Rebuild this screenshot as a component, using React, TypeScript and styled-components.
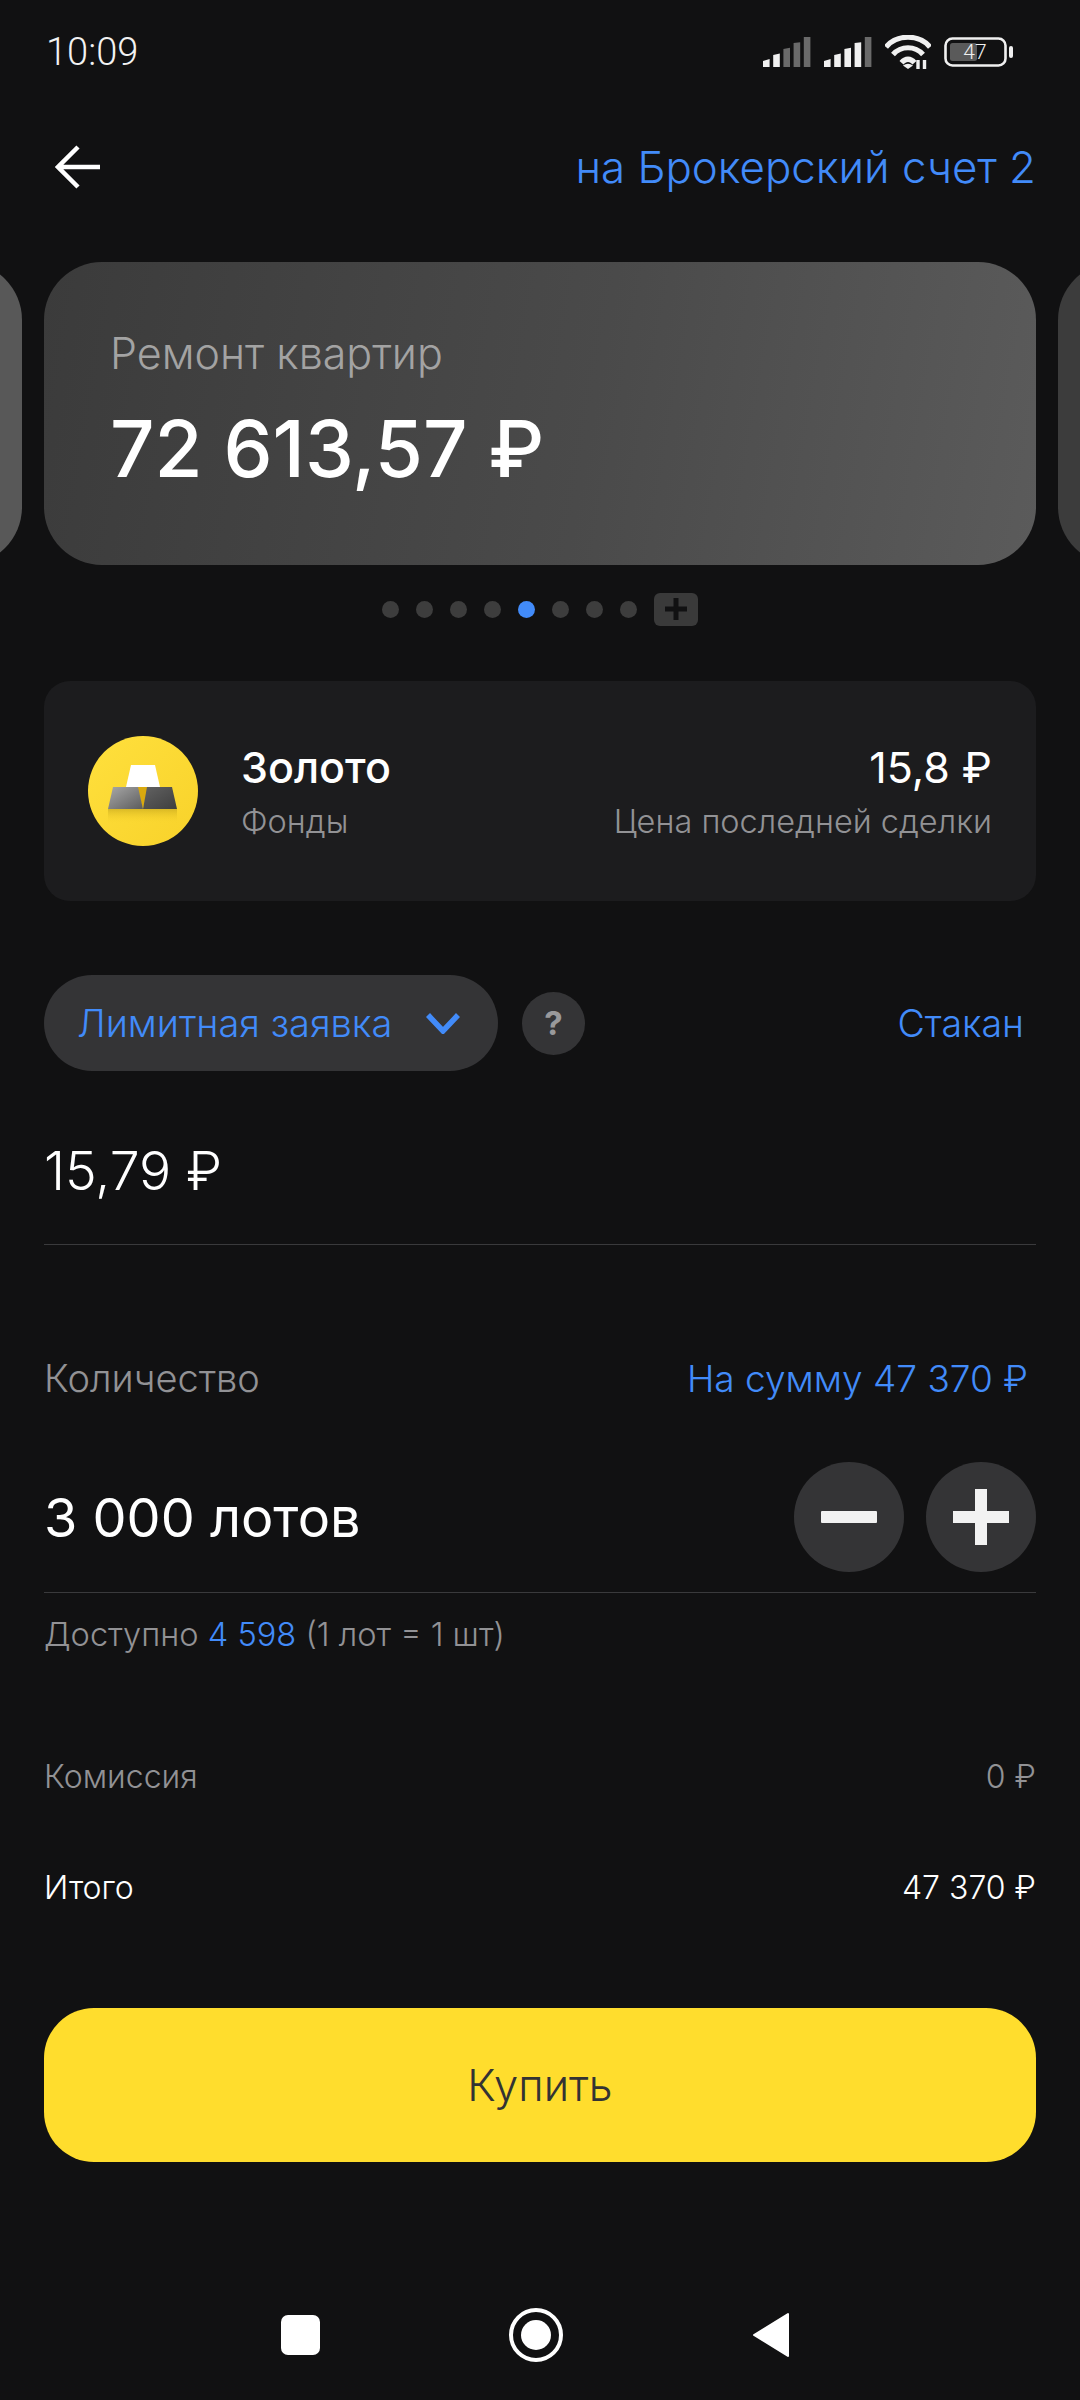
import React from "react";
import styled, { createGlobalStyle } from "styled-components";

const GlobalStyle = createGlobalStyle`
  html, body {
    margin: 0;
    padding: 0;
    background: #111112;
  }
  body {
    font-family: Inter, "Noto Sans", sans-serif;
  }
`;

const Page = styled.div`
  width: 1080px;
  height: 2400px;
  overflow: hidden;
  background: #111112;
  color: #fff;
  display: flex;
  flex-direction: column;
`;

const StatusBar = styled.div`
  height: 104px;
  padding: 0 66px 0 46px;
  display: flex;
  align-items: center;
  justify-content: space-between;
  font-size: 38px;
  font-weight: 300;
  color: #f2f2f2;
  font-family: Roboto, sans-serif;
`;

const StatusIcons = styled.div`
  display: flex;
  align-items: center;
  gap: 13px;
`;

const Header = styled.header`
  height: 126px;
  padding: 0 44px 0 55px;
  display: flex;
  align-items: center;
  justify-content: space-between;
`;

const AccountLink = styled.span`
  font-size: 43.8px;
  font-weight: 300;
  color: #428bf9;
`;

const Carousel = styled.div`
  margin-top: 32px;
  height: 303px;
  display: flex;
  gap: 22px;
`;

// the neighbouring cards only show a sliver, so the rounded card is clipped
const Peek = styled.div<{ $side: "left" | "right" }>`
  width: 22px;
  flex: none;
  overflow: hidden;
  display: flex;
  justify-content: ${(p) => (p.$side === "left" ? "flex-end" : "flex-start")};
  &::before {
    content: "";
    flex: none;
    width: 120px;
    height: 100%;
    border-radius: 58px;
    background: ${(p) => (p.$side === "left" ? "#585858" : "#3c3c3c")};
  }
`;

const AccountCard = styled.div`
  flex: 1;
  border-radius: 58px;
  padding: 66px 66px 0;
  background: linear-gradient(100deg, #3b3b3b 0%, #4a4a4a 55%, #5b5b5b 100%);
`;

const CardTitle = styled.div`
  font-size: 43px;
  line-height: 50px;
  color: #a3a3a3;
  font-weight: 300;
`;

const CardAmount = styled.div`
  margin-top: 26px;
  font-size: 78px;
  line-height: 90px;
  font-weight: 500;
`;

const Dots = styled.div`
  margin-top: 27px;
  height: 34px;
  padding-left: 382px;
  display: flex;
  align-items: center;
  gap: 17px;
`;

const Dot = styled.span<{ $active?: boolean }>`
  width: 17px;
  height: 17px;
  border-radius: 50%;
  background: ${(p) => (p.$active ? "#428bf9" : "#3d3d3d")};
`;

const AddDot = styled.span`
  width: 44px;
  height: 33px;
  border-radius: 6px;
  background: #3a3a3a;
  display: flex;
  align-items: center;
  justify-content: center;
`;

const InstrumentCard = styled.div`
  margin: 55px 44px 0;
  height: 220px;
  padding: 0 44px;
  border-radius: 26px;
  background: #1c1c1e;
  display: flex;
  align-items: center;
  box-sizing: border-box;
`;

const InstrumentLogo = styled.svg`
  width: 110px;
  height: 110px;
  flex: none;
  margin: 0 43px 0 0;
`;

const InstrumentText = styled.div<{ $right?: boolean }>`
  display: flex;
  flex-direction: column;
  gap: 10px;
  margin-top: 2px;
  ${(p) => (p.$right ? "margin-left: auto; align-items: flex-end;" : "")}
`;

const InstrumentName = styled.div<{ $regular?: boolean }>`
  font-size: 43px;
  line-height: 50px;
  font-weight: ${(p) => (p.$regular ? 400 : 500)};
`;

const InstrumentSub = styled.div`
  font-size: 32.5px;
  line-height: 40px;
  font-weight: 300;
  color: #929295;
`;

const OrderRow = styled.div`
  margin: 74px 44px 0;
  height: 96px;
  padding-right: 12px;
  display: flex;
  align-items: center;
`;

const OrderSelect = styled.div`
  width: 454px;
  height: 96px;
  padding: 0 38px 0 33px;
  border-radius: 48px;
  box-sizing: border-box;
  background: #343436;
  display: flex;
  align-items: center;
  justify-content: space-between;
  font-size: 38px;
  font-weight: 300;
  color: #428bf9;
`;

const HelpButton = styled.div`
  width: 63px;
  height: 63px;
  margin-left: 24px;
  border-radius: 50%;
  background: #343436;
  color: #99999b;
  font-size: 33px;
  font-weight: 700;
  display: flex;
  align-items: center;
  justify-content: center;
`;

const BlueAction = styled.span<{ $push?: boolean; $size: number }>`
  font-size: ${(p) => p.$size}px;
  font-weight: 300;
  color: #428bf9;
  ${(p) => (p.$push ? "margin-left: auto;" : "")}
`;

const PriceField = styled.div`
  margin: 0 44px;
  height: 174px;
  padding-top: 64px;
  box-sizing: border-box;
  border-bottom: 1px solid #3a3a3c;
  font-size: 53.5px;
  line-height: 72px;
  font-weight: 300;
`;

const LabelRow = styled.div`
  margin: 108px 44px 0;
  height: 50px;
  padding-right: 8px;
  display: flex;
  align-items: center;
  justify-content: space-between;
`;

const MutedLabel = styled.span`
  font-size: 38px;
  font-weight: 300;
  color: #929295;
`;

const QuantityRow = styled.div`
  margin: 59px 44px 0;
  padding-bottom: 20px;
  border-bottom: 1px solid #3a3a3c;
  display: flex;
  align-items: center;
  justify-content: space-between;
`;

const QuantityValue = styled.span`
  font-size: 54px;
  font-weight: 400;
`;

const Steppers = styled.div`
  display: flex;
  gap: 22px;
`;

const StepButton = styled.div`
  width: 110px;
  height: 110px;
  border-radius: 50%;
  background: #343436;
  display: flex;
  align-items: center;
  justify-content: center;
`;

const Available = styled.div`
  margin: 19px 44px 0;
  height: 44px;
  font-size: 32.6px;
  line-height: 44px;
  font-weight: 300;
  color: #929295;
`;

const Accent = styled.span`
  color: #428bf9;
`;

const SummaryRow = styled.div<{ $strong?: boolean; $gap: number }>`
  margin: ${(p) => p.$gap}px 44px 0;
  height: 44px;
  display: flex;
  align-items: center;
  justify-content: space-between;
  font-size: 32px;
  font-weight: 300;
  color: ${(p) => (p.$strong ? "#ffffff" : "#929295")};
`;

const BuyButton = styled.button`
  margin: 99px 44px 0;
  height: 154px;
  border: none;
  border-radius: 50px;
  background: #ffdd2d;
  color: #333333;
  font-family: inherit;
  font-size: 43.5px;
  font-weight: 300;
`;

const NavBar = styled.nav`
  margin-top: 143px;
  height: 60px;
  padding: 0 290px 0 281px;
  display: flex;
  align-items: center;
  justify-content: space-between;
`;

const NavSquare = styled.span`
  width: 39px;
  height: 40px;
  border-radius: 7px;
  background: #fff;
`;

const NavCircle = styled.span`
  width: 54px;
  height: 54px;
  border: 4px solid #fff;
  border-radius: 50%;
  box-sizing: border-box;
  display: flex;
  align-items: center;
  justify-content: center;
  &::after {
    content: "";
    width: 30px;
    height: 30px;
    border-radius: 50%;
    background: #fff;
  }
`;

const SignalIcon = ({ lit }: { lit: number }) => (
  <svg width="48" height="30" viewBox="0 0 48 30">
    {[0, 1, 2, 3, 4].map((i) => (
      <path
        key={i}
        d={`M${i * 10.2} ${30 - (6 + i * 6)} L${i * 10.2 + 6.6} ${30 - (8 + i * 5.6)} V30 H${i * 10.2} Z`}
        fill={i < lit ? "#f0f0f0" : "#6a6a6a"}
      />
    ))}
  </svg>
);

const WifiIcon = () => (
  <svg width="46" height="34" viewBox="0 0 46 34">
    <g fill="none" stroke="#f0f0f0" strokeWidth="5.2">
      <path d="M1 12 C12 -1 34 -1 45 12" />
      <path d="M8 19.5 C16 10.5 30 10.5 38 19.5" />
    </g>
    <path d="M14.5 26 C19 20 27 20 31.5 26 L27.5 29.5 C25 26 21 26 18.5 29.5 Z" fill="#f0f0f0" />
    <path d="M18 30.5 L23 34 L28 30.5 Q23 27 18 30.5 Z" fill="#f0f0f0" />
    <path d="M33 34 V25 M39.5 25 V34" stroke="#f0f0f0" strokeWidth="3.4" />
  </svg>
);

const BatteryIcon = () => (
  <svg width="70" height="30" viewBox="0 0 70 30">
    <rect x="1.5" y="1.5" width="60" height="27" rx="7" fill="none" stroke="#f0f0f0" strokeWidth="2.6" />
    <rect x="6" y="6" width="27" height="18" rx="2.5" fill="#5a5a5a" />
    <rect x="65" y="9" width="4" height="12" rx="2" fill="#f0f0f0" />
    <text x="31" y="22" textAnchor="middle" fontFamily="Roboto, sans-serif" fontSize="21" fill="#f0f0f0">
      47
    </text>
  </svg>
);

const GoldLogo = () => (
  <InstrumentLogo viewBox="0 0 110 110">
    <defs>
      <linearGradient id="goldBg" x1="0" y1="0" x2="1" y2="1">
        <stop offset="0" stopColor="#ffe03d" />
        <stop offset="1" stopColor="#f8d22a" />
      </linearGradient>
      <linearGradient id="barLeft" x1="0" y1="0" x2="1" y2="1">
        <stop offset="0" stopColor="#a8a8a8" />
        <stop offset="1" stopColor="#5c5c5c" />
      </linearGradient>
      <linearGradient id="barRight" x1="0" y1="0" x2="1" y2="1">
        <stop offset="0" stopColor="#626262" />
        <stop offset="1" stopColor="#3e3e3e" />
      </linearGradient>
      <linearGradient id="barShadow" x1="0" y1="0" x2="0" y2="1">
        <stop offset="0" stopColor="#b89a18" stopOpacity="0.5" />
        <stop offset="1" stopColor="#f8d22a" stopOpacity="0" />
      </linearGradient>
    </defs>
    <circle cx="55" cy="55" r="55" fill="url(#goldBg)" />
    <rect x="20" y="73" width="69" height="14" fill="url(#barShadow)" />
    <path d="M43 29 H67 L72 51 H38 Z" fill="#ffffff" />
    <path d="M49 51 H60 L55 73 Z" fill="#d9a90e" />
    <path d="M25 51 H50 L55 73 H20 Z" fill="url(#barLeft)" />
    <path d="M59 51 H84 L89 73 H55 Z" fill="url(#barRight)" />
  </InstrumentLogo>
);

const App: React.FC = () => {
  return (
    <Page>
      <GlobalStyle />
      <StatusBar>
        <span>10:09</span>
        <StatusIcons>
          <SignalIcon lit={2} />
          <SignalIcon lit={4} />
          <WifiIcon />
          <BatteryIcon />
        </StatusIcons>
      </StatusBar>

      <Header>
        <svg width="45" height="44" viewBox="0 0 45 44" fill="none" stroke="#fff" strokeWidth="4.5">
          <path d="M45 22 H4 M23 2 L3 22 L23 42" />
        </svg>
        <AccountLink>на Брокерский счет 2</AccountLink>
      </Header>

      <Carousel>
        <Peek $side="left" />
        <AccountCard>
          <CardTitle>Ремонт квартир</CardTitle>
          <CardAmount>72 613,57 ₽</CardAmount>
        </AccountCard>
        <Peek $side="right" />
      </Carousel>

      <Dots>
        {[0, 1, 2, 3, 4, 5, 6, 7].map((i) => (
          <Dot key={i} $active={i === 4} />
        ))}
        <AddDot>
          <svg width="22" height="22" viewBox="0 0 22 22" stroke="#111112" strokeWidth="5">
            <path d="M11 0 V22 M0 11 H22" />
          </svg>
        </AddDot>
      </Dots>

      <InstrumentCard>
        <GoldLogo />
        <InstrumentText>
          <InstrumentName>Золото</InstrumentName>
          <InstrumentSub>Фонды</InstrumentSub>
        </InstrumentText>
        <InstrumentText $right>
          <InstrumentName $regular>15,8 ₽</InstrumentName>
          <InstrumentSub>Цена последней сделки</InstrumentSub>
        </InstrumentText>
      </InstrumentCard>

      <OrderRow>
        <OrderSelect>
          Лимитная заявка
          <svg width="34" height="22" viewBox="0 0 34 22" fill="none" stroke="#428bf9" strokeWidth="5.5">
            <path d="M2 3 L17 19 L32 3" />
          </svg>
        </OrderSelect>
        <HelpButton>?</HelpButton>
        <BlueAction $push $size={37.5}>
          Стакан
        </BlueAction>
      </OrderRow>

      <PriceField>15,79 ₽</PriceField>

      <LabelRow>
        <MutedLabel>Количество</MutedLabel>
        <BlueAction $size={37}>На сумму 47 370 ₽</BlueAction>
      </LabelRow>

      <QuantityRow>
        <QuantityValue>3 000 лотов</QuantityValue>
        <Steppers>
          <StepButton>
            <svg width="56" height="56" viewBox="0 0 56 56">
              <rect x="0" y="22" width="56" height="12" rx="1" fill="#f2f2f2" />
            </svg>
          </StepButton>
          <StepButton>
            <svg width="56" height="56" viewBox="0 0 56 56">
              <path d="M22 0 H34 V22 H56 V34 H34 V56 H22 V34 H0 V22 H22 Z" fill="#f2f2f2" />
            </svg>
          </StepButton>
        </Steppers>
      </QuantityRow>

      <Available>
        Доступно <Accent>4 598</Accent> (1 лот = 1 шт)
      </Available>

      <SummaryRow $gap={98}>
        <span>Комиссия</span>
        <span>0 ₽</span>
      </SummaryRow>
      <SummaryRow $gap={67} $strong>
        <span>Итого</span>
        <span>47 370 ₽</span>
      </SummaryRow>

      <BuyButton>Купить</BuyButton>

      <NavBar>
        <NavSquare />
        <NavCircle />
        <svg width="38" height="46" viewBox="0 0 38 46">
          <path d="M36 2 V44 L2 23 Z" fill="#fff" stroke="#fff" strokeWidth="2" strokeLinejoin="round" />
        </svg>
      </NavBar>
    </Page>
  );
};

export default App;
